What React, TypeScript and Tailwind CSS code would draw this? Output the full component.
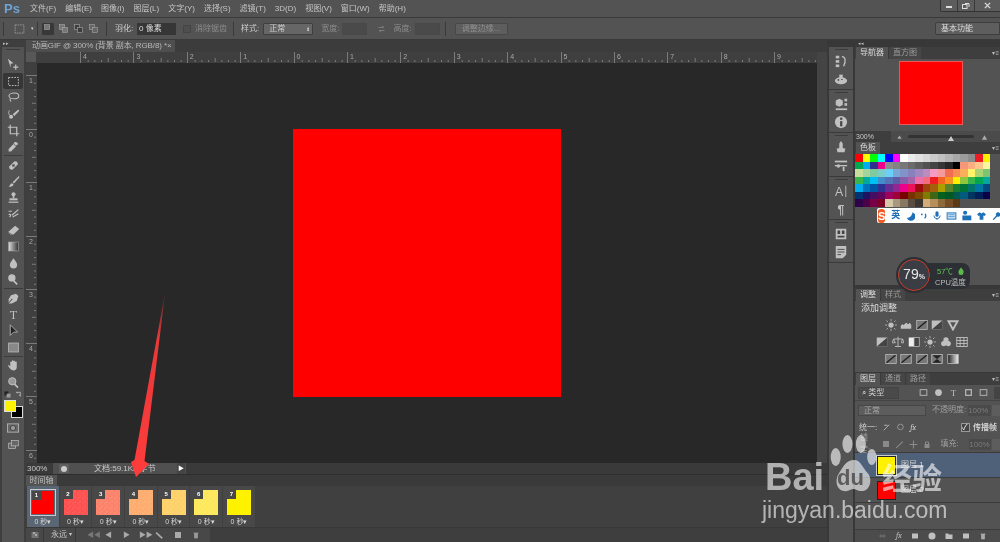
import React from "react";

const S: React.FC<{ w?: number; h?: number; v?: string; className?: string; children: React.ReactNode }> = ({ w = 14, h = 14, v = "0 0 16 16", className = "", children }) => (
  <svg width={w} height={h} viewBox={v} className={"shrink-0 " + className}>{children}</svg>
);
const G = "#c0c0c0";

const toolIcons: React.ReactNode[] = [
  <g fill={G}><path d="M1 1l7 5.500-3.500 .5v5z" /><path d="M10 8h1.500v2.500H14V12h-2.500v2.500H10V12H7.500v-1.500H10z" /></g>,
  <rect x="2" y="3" width="12" height="10" fill="none" stroke={G} strokeWidth="1.200" strokeDasharray="2 1.500" />,
  <g fill="none" stroke={G} strokeWidth="1.300"><ellipse cx="8.500" cy="6" rx="6" ry="3.500" /><path d="M4 9c-1 2 0 3 1 4" /></g>,
  <g fill={G}><path d="M14 3L7 9l2 2 6-6z" /><circle cx="5" cy="12" r="2.500" /><path d="M3 4a5 5 0 0 0 0 6" fill="none" stroke={G} /></g>,
  <g fill="none" stroke={G} strokeWidth="1.500"><path d="M4 1v11h11M1 4h11v11" /></g>,
  <g fill={G}><path d="M11 2l3 3-2 1-1 1-3-3 1-1z" /><path d="M8 5l3 3-6 6H2v-3z" /></g>,
  <g fill={G}><path d="M3 9l6-6a3 3 0 0 1 4 4l-6 6a3 3 0 0 1-4-4z" /><rect x="6.500" y="6.500" width="3" height="3" fill="#555" /></g>,
  <g fill={G}><path d="M15 1L7 9l1.500 1.500L15 3z" /><path d="M6 10c-2 0-2 3-4 4 3 1 6 0 6-2.500z" /></g>,
  <g fill={G}><circle cx="8" cy="4" r="2.500" /><rect x="7" y="5" width="2" height="4" /><rect x="3" y="9" width="10" height="2.500" /><rect x="2" y="13" width="12" height="1.500" /></g>,
  <g fill="none" stroke={G} strokeWidth="1.500"><path d="M14 2L6 9M14 7l-7 4" /><path d="M2 8c3-1 3 2 1 3M2 4h4" /></g>,
  <g fill={G}><path d="M10 2l5 4-7 7H4l-3-3z" /><path d="M1 10l5 3" stroke="#555" /></g>,
  <g><defs><linearGradient id="gr"><stop offset="0" stopColor="#ddd" /><stop offset="1" stopColor="#333" /></linearGradient></defs><rect x="2" y="2.500" width="12" height="11" fill="url(#gr)" stroke="#aaa" strokeWidth=".7" /></g>,
  <path d="M8 1.500c2 3 4.500 5.500 4.500 8a4.500 4.500 0 0 1-9 0c0-2.500 2.500-5 4.500-8z" fill={G} />,
  <g fill={G}><circle cx="6" cy="6" r="4.500" /><rect x="9" y="9" width="6" height="2" transform="rotate(45 9 9)" /></g>,
  <g fill={G}><path d="M11 2l3 3-2 6-6 3-4 0 5-5-1-1-4 5 0-4 3-5z" /></g>,
  <text x="8" y="14" textAnchor="middle" fontSize="15" fontFamily="'Liberation Serif',serif" fill={G}>T</text>,
  <path d="M4 1l9 9H8l-4 4z" fill="#222" stroke={G} />,
  <rect x="2" y="2.500" width="12" height="11" fill="#888" stroke="#bbb" />,
  <path d="M4 8V4a1 1 0 0 1 2 0V2.500a1 1 0 0 1 2 0V3a1 1 0 0 1 2 0v1a1 1 0 0 1 2 0v6c0 3-2 4-4 4-3 0-4-2-7-6 1-1 2 0 3 1z" fill={G} />,
  <g><circle cx="6.500" cy="6.500" r="4.500" fill="#999" stroke={G} strokeWidth="1.200" /><rect x="9.500" y="9.500" width="6" height="2" transform="rotate(45 10 10)" fill={G} /></g>,
];
const toolGroups = [[0, 1, 2, 3, 4, 5], [6, 7, 8, 9, 10, 11, 12, 13], [14, 15, 16, 17], [18, 19]];

const Toolbar = () => (
  <div className="w-[26px] shrink-0 bg-[#3e3e3e] flex flex-col">
    <div className="h-[7px] text-[5px] leading-[7px] text-[#bbb] pl-[3px]">▸▸</div>
    <div className="ml-[2px] w-[22px] flex-1 bg-[#535353] flex flex-col items-center pt-[2px]">
      <div className="w-[14px] h-px bg-[#3a3a3a] mb-[6.500px]" />
      {toolGroups.map((g, i) => (
        <div key={i} className="flex flex-col items-center w-full">
          {g.map(t => (
            <div key={t} className={"relative w-[20px] h-[16.400px] flex items-center justify-center " + (t === 1 ? "bg-[#363636] rounded-[2px]" : "")}>
              <S w={13} h={13}>{toolIcons[t]}</S>
            </div>
          ))}
          {i < 3 && <div className="w-[19px] h-px bg-[#3c3c3c] my-[0.500px]" />}
        </div>
      ))}
      <div className="w-full flex justify-between px-[2px] mt-[1px] h-[9px]">
        <S w={7} h={7}><rect x="1" y="1" width="9" height="9" fill="#222" /><rect x="6" y="6" width="9" height="9" fill="#999" /></S>
        <S w={7} h={7}><path d="M3 3h9v9M12 12l-2-3M3 3l3 2" fill="none" stroke="#bbb" strokeWidth="2" /></S>
      </div>
      <div className="w-[19px] h-[19px] relative">
        <div className="w-[12px] h-[12px] bg-[#000] border border-[#ddd] ml-[7px] mt-[6px]" />
        <div className="absolute left-0 top-0 w-[12px] h-[12px] bg-[#fff200] border border-[#ddd]" />
      </div>
      <div className="mt-[1px] h-[16px] flex items-center">
        <S w={12} h={10} v="0 0 16 12"><rect x=".5" y=".5" width="15" height="11" fill="#666" stroke={G} /><circle cx="8" cy="6" r="3.500" fill="#999" stroke="#333" /></S>
      </div>
      <div className="h-[16px] flex items-center">
        <S w={13} h={11}><rect x="1" y="6" width="10" height="8" fill="#666" stroke={G} /><rect x="5" y="2" width="10" height="8" fill="#666" stroke={G} /></S>
      </div>
    </div>
  </div>
);

const menus = ["文件(F)", "编辑(E)", "图像(I)", "图层(L)", "文字(Y)", "选择(S)", "滤镜(T)", "3D(D)", "视图(V)", "窗口(W)", "帮助(H)"];

const MenuBar = () => (
  <div className="h-[18px] shrink-0 bg-[#535353] border-b border-[#3a3a3a] flex items-start relative">
    <div className="w-[30px] pl-[4px] h-[17px] text-[#6fa3d3] text-[13px] leading-[17px] font-bold">Ps</div>
    <div className="flex gap-[9px] text-[8px] leading-[17px] text-[#c4c4c4]">
      {menus.map(m => <span key={m}>{m}</span>)}
    </div>
    <div className="ml-auto flex h-[12px] w-[60px] bg-[#5c5c5c] border-b border-l border-[#333] rounded-bl-[2px]">
      <div className="w-[17px] flex items-center justify-center border-r border-[#3a3a3a]"><div className="w-[6px] h-[1.500px] mt-[3px] bg-[#ddd]" /></div>
      <div className="w-[17px] flex items-center justify-center border-r border-[#3a3a3a]"><S w={8} h={8}><rect x="1" y="5" width="9" height="8" fill="none" stroke="#ddd" strokeWidth="2" /><path d="M6 3h8v7" fill="none" stroke="#ddd" strokeWidth="2" /></S></div>
      <div className="flex-1 flex items-center justify-center"><S w={7} h={7}><path d="M2 2l12 12M14 2L2 14" stroke="#ddd" strokeWidth="3" /></S></div>
    </div>
  </div>
);

const Sep = ({ cls }: { cls: string }) => <div className={"w-px h-[14px] bg-[#3a3a3a] " + cls} />;
const ModeIc = ({ a, on }: { a: string; on?: boolean }) => (
  <div className={"w-[12px] h-[12px] flex items-center justify-center " + (on ? "bg-[#383838] rounded-[1px]" : "")}>
    <S w={9} h={9}><rect x="1" y="1" width="9" height="9" fill={a} stroke="#aaa" /><rect x="6" y="6" width="9" height="9" fill={on ? "none" : a} stroke={on ? "none" : "#aaa"} /></S>
  </div>
);
const DimInput = ({ w, ml }: { w: string; ml: string }) => <div className={"h-[12px] bg-[#4a4a4a] border border-[#484848] " + w + " " + ml} />;

const OptionsBar = () => (
  <div className="h-[22px] shrink-0 bg-[#535353] border-b border-[#3a3a3a] flex items-center text-[8px] text-[#cfcfcf]">
    <Sep cls="ml-[3px]" />
    <S w={11} h={10} className="ml-[10px]"><rect x="1" y="1.500" width="14" height="13" fill="none" stroke="#aaa" strokeWidth="1.300" strokeDasharray="2.500 1.500" /></S>
    <span className="ml-[6px] text-[5px]">▾</span>
    <Sep cls="ml-[3px]" />
    <div className="ml-[4px] flex gap-[3px]"><ModeIc a="#777" on /><ModeIc a="#777" /><ModeIc a="#3e3e3e" /><ModeIc a="#666" /></div>
    <Sep cls="ml-[7px]" />
    <span className="ml-[8px] w-[19px]">羽化:</span>
    <div className="ml-[3px] w-[39px] h-[12px] bg-[#363636] pl-[2px] leading-[12px] text-[#ddd]">0 像素</div>
    <div className="ml-[7px] w-[8px] h-[8px] bg-[#4e4e4e] border border-[#444]" />
    <span className="ml-[4px] text-[#8c8c8c]">消除锯齿</span>
    <Sep cls="ml-[6px]" />
    <span className="ml-[7px]">样式:</span>
    <div className="ml-[4px] w-[50px] h-[12px] bg-[#666] border border-[#3e3e3e] rounded-[1px] pl-[5px] leading-[10px] flex justify-between pr-[2px]"><span>正常</span><span className="text-[5px]">⬍</span></div>
    <span className="ml-[8px] text-[#8c8c8c]">宽度:</span>
    <DimInput w="w-[25px]" ml="ml-[3px]" />
    <S w={9} h={8} className="ml-[10px]"><path d="M2 5h10M9 2l4 3M14 11H4M7 14l-4-3" stroke="#888" strokeWidth="1.500" fill="none" /></S>
    <span className="ml-[7px] text-[#8c8c8c]">高度:</span>
    <DimInput w="w-[25px]" ml="ml-[3px]" />
    <Sep cls="ml-[5px]" />
    <div className="ml-[9px] w-[53px] h-[12px] bg-[#5e5e5e] border border-[#484848] rounded-[1px] text-center leading-[10px] text-[#8f8f8f]">调整边缘...</div>
    <div className="ml-auto w-[65px] h-[13px] bg-[#5e5e5e] border border-[#3e3e3e] rounded-l-[2px] pl-[5px] leading-[11px] text-[#ddd]">基本功能</div>
  </div>
);

const Ticks = ({ vertical }: { vertical?: boolean }) => (
  vertical ? (
    <svg width="10" height="53.500" className="absolute left-0 top-0">
      {[1, 2, 3, 4, 5, 6, 7].map(i => <rect key={i} x={i === 4 ? 6 : 8} y={i * 6.69} width={i === 4 ? 4 : 2} height="1" fill="#7a7a7a" />)}
    </svg>
  ) : (
    <svg width="53.400" height="10" className="absolute left-0 top-0">
      {[1, 2, 3, 4, 5, 6, 7].map(i => <rect key={i} x={i * 6.67} y={i === 4 ? 6 : 8} width="1" height={i === 4 ? 4 : 2} fill="#7a7a7a" />)}
    </svg>
  )
);

const topRuler = ["4", "3", "2", "1", "0", "1", "2", "3", "4", "5", "6", "7", "8", "9"];
const sideRuler = ["1", "0", "1", "2", "3", "4", "5", "6"];

const Frame = ({ n, sel, color }: { n: number; sel?: boolean; color: string }) => (
  <div className={"w-[31.700px] mr-px h-full flex flex-col items-center pt-[3px] " + (sel ? "bg-[#5b6675]" : "bg-[#484848]")}>
    <div className={"relative w-[26px] h-[28px] p-px " + (sel ? "border border-[#c8ccd2]" : "")}>
      <div className="w-full h-full" style={{ background: color }} />
      <div className="absolute left-px top-px w-[9px] h-[9px] bg-[#484848] text-white text-[6px] leading-[9px] font-bold text-center">{n}</div>
    </div>
    <div className="text-[7px] leading-[10px] text-[#d8d8d8] mt-[1px]">0 秒▾</div>
  </div>
);
const ck = (c: string, d: string) => `repeating-conic-gradient(${c} 0% 25%, ${d} 0% 50%) 0 0 / 5px 5px`;
const frames = [
  { color: "#ff0000" },
  { color: ck("#ff5050", "#fb5a58") },
  { color: ck("#fd806a", "#fa8a70") },
  { color: ck("#ffaa6e", "#fcb276") },
  { color: ck("#ffd068", "#fcd472") },
  { color: ck("#ffe75a", "#fce964") },
  { color: "#fff200" },
];

const Center = () => (
  <div className="flex-1 min-w-0 flex flex-col bg-[#3a3a3a]">
    <div className="h-[12px] shrink-0 flex bg-[#3c3c3c]">
      <div className="w-[149px] bg-[#4e4e4e] text-[8px] leading-[11px] text-[#b8b8b8] pl-[6px] flex justify-between pr-[4px] whitespace-nowrap overflow-hidden">
        <span className="tracking-[-0.1px]">动画GIF @ 300% (背景 副本, RGB/8) *</span><span>×</span>
      </div>
    </div>
    <div className="flex-1 min-h-0 flex">
      <div className="flex-1 min-w-0 flex flex-col">
        <div className="h-[11px] shrink-0 flex bg-[#3f3f3f] overflow-hidden">
          <div className="w-[10px] h-[10px] bg-[#575757] shrink-0" />
          <div className="w-[44px] shrink-0 relative" />
          {topRuler.map((t, i) => (
            <div key={i} className="w-[53.400px] shrink-0 relative border-l border-[#7a7a7a] text-[7px] leading-[9px] pl-[2px] text-[#a8a8a8]">
              <Ticks />{t}
            </div>
          ))}
        </div>
        <div className="flex-1 min-h-0 flex">
          <div className="w-[11px] shrink-0 bg-[#3f3f3f] flex flex-col overflow-hidden">
            <div className="h-[12px] shrink-0" />
            {sideRuler.map((t, i) => (
              <div key={i} className="h-[53.500px] shrink-0 relative border-t border-[#7a7a7a] text-[7px] leading-[9px] pl-[3px] text-[#a8a8a8]">
                <Ticks vertical />{t}
              </div>
            ))}
          </div>
          <div className="flex-1 bg-[#282828] flex items-center justify-center pb-[1px]">
            <div className="w-[268px] h-[268px] bg-[#ff0000]" />
          </div>
        </div>
      </div>
      <div className="w-[10px] shrink-0 bg-[#444]" />
    </div>
    <div className="h-[11px] shrink-0 flex bg-[#3a3a3a] text-[8px] leading-[11px] text-[#c8c8c8]">
      <div className="w-[27px] pl-px">300%</div>
      <div className="w-[133px] bg-[#505050] flex items-center">
        <div className="w-[10px] h-[9px] ml-[6px] bg-[#5f5f5f] flex items-center justify-center"><div className="w-[6px] h-[6px] rounded-full bg-[#ccc]" /></div>
        <div className="ml-[25px] w-[62px] whitespace-nowrap">文档:59.1K/0字节</div>
        <div className="w-[8px] h-full bg-[#444] ml-auto mr-px text-[6px] text-white text-center">▶</div>
      </div>
    </div>
    <div className="h-[12px] shrink-0 flex bg-[#3a3a3a] border-t border-[#2e2e2e]">
      <div className="w-[31px] bg-[#535353] text-[8px] leading-[11px] text-center text-[#bdbdbd]">时间轴</div>
    </div>
    <div className="h-[41px] shrink-0 bg-[#404040] flex pl-[1px]">
      {frames.map((f, i) => <Frame key={i} n={i + 1} sel={i === 0} color={f.color} />)}
    </div>
    <div className="h-[15px] shrink-0 bg-[#3e3e3e] border-t border-[#383838] text-[#c8c8c8] text-[8px]">
      <div className="w-[184px] h-full bg-[#484848] flex items-center">
        <div className="w-[18px] flex justify-center border-r border-[#383838] h-full items-center">
          <S w={10} h={8}><path d="M1 4h14M1 8h14M1 12h14" stroke="#bbb" strokeWidth="1.500" /><path d="M6 2v4M10 6v4" stroke="#ddd" strokeWidth="2" /></S>
        </div>
        <div className="w-[32px] pl-[7px] flex justify-between pr-[3px] border-r border-[#383838] h-full leading-[13px]"><span>永远</span><span className="text-[6px]">▾</span></div>
        <div className="flex items-center pl-[11px] text-[7px] text-[#a8a8a8] tracking-tighter">
          <span className="w-[18px] text-[#777]">◀◀</span><span className="w-[18px] text-[#aaa]">◀</span><span className="w-[16px]">▶</span><span className="w-[14px]">▶▶</span>
        </div>
        <S w={9} h={9} className="ml-[2px]"><path d="M2 3l11 10" stroke="#aaa" strokeWidth="3" /></S>
        <S w={8} h={8} className="ml-[10px]"><rect x="2" y="2" width="12" height="12" fill="#aaa" /></S>
        <S w={8} h={8} className="ml-[10px]"><path d="M3 4h10M5 4v10h6V4" fill="#999" stroke="#999" strokeWidth="1.500" /></S>
      </div>
    </div>
  </div>
);

const dockGroups: React.ReactNode[][] = [
  [<g fill={G}><rect x="2" y="2" width="4" height="3" /><rect x="2" y="7" width="4" height="3" /><rect x="2" y="12" width="4" height="3" /><path d="M9 3c4 0 5 5 2 11" fill="none" stroke={G} strokeWidth="1.500" /></g>,
   <g><ellipse cx="8" cy="10" rx="7" ry="4" fill={G} /><circle cx="5" cy="9" r="1" fill="#444" /><circle cx="9" cy="8" r="1" fill="#444" /><rect x="6" y="3" width="4" height="5" fill={G} /></g>],
  [<g fill={G}><path d="M2 4l4-2 4 2v5l-4 2-4-2z" /><rect x="12" y="2" width="3" height="3" /><rect x="12" y="7" width="3" height="3" /><rect x="2" y="13" width="13" height="2" /></g>,
   <g><circle cx="8" cy="8" r="7" fill={G} /><rect x="7" y="7" width="2.500" height="6" fill="#444" /><rect x="7" y="3" width="2.500" height="2.500" fill="#444" /></g>],
  [<g fill={G}><path d="M8 1l2 3v5l3 1-1 4H4l-1-4 3-1V4z" /></g>,
   <g fill={G}><rect x="1" y="3" width="14" height="2" /><circle cx="5" cy="9" r="2" /><rect x="1" y="8" width="14" height="1.500" /><path d="M11 10v5" stroke={G} strokeWidth="2" /></g>],
  [<g><text x="1" y="14" fontSize="14" fontFamily="'Liberation Sans',sans-serif" fill={G}>A</text><rect x="13" y="2" width="1" height="13" fill={G} /></g>,
   <text x="4" y="14" fontSize="14" fontWeight="bold" fontFamily="'Liberation Sans',sans-serif" fill={G}>¶</text>],
  [<g><rect x="2" y="2" width="12" height="12" fill={G} /><rect x="4" y="4" width="3" height="4" fill="#444" /><rect x="9" y="4" width="3" height="4" fill="#444" /><rect x="4" y="10" width="8" height="2" fill="#444" /></g>,
   <g><path d="M2 1h12v10l-4 4H2z" fill={G} /><path d="M4 5h8M4 8h8M4 11h4" stroke="#444" /></g>],
];

const Dock = () => (
  <div className="w-[28px] shrink-0 bg-[#383838] flex flex-col pl-[2px] pr-[2px]">
    <div className="h-[7px]" />
    {dockGroups.map((g, i) => (
      <div key={i} className="h-[43.200px] shrink-0 bg-[#535353] border-b border-[#3a3a3a] flex flex-col items-center pt-[2px] gap-[4px]">
        <div className="w-[13px] h-px bg-[#3c3c3c]" />
        {g.map((c, j) => <S key={j} w={14} h={14}>{c}</S>)}
      </div>
    ))}
    <div className="flex-1 bg-[#535353]" />
  </div>
);

const swatchRows = [
  ["#ff0000","#ffff00","#00ff00","#00ffff","#0000ff","#ff00ff","#ffffff","#ebebeb","#e1e1e1","#d7d7d7","#cbcbcb","#c0c0c0","#b4b4b4","#a8a8a8","#9b9b9b","#8d8d8d","#ed1c24","#fff200"],
  ["#00a651","#00aeef","#2e3192","#ec008c","#8c8c8c","#828282","#777777","#6b6b6b","#5e5e5e","#525252","#444444","#363636","#262626","#000000","#f7977a","#fbad82","#fdc68c","#fff799"],
  ["#c6df9c","#a4d49d","#81ca9d","#7bcdc9","#6ccff7","#7ca6d8","#8293ca","#8881be","#a286bd","#bc8cbf","#f49bc1","#f5999d","#f26c4f","#f68e55","#fbaf5a","#fff467","#acd372","#7dc473"],
  ["#39b54a","#00a99d","#00bff3","#438ccb","#5573b7","#5e5ca7","#855fa8","#a763a9","#ef6ea8","#f16d7e","#ee1d24","#f16522","#f7941d","#fff100","#8fc63d","#37b44a","#00a650","#00a99e"],
  ["#00aeef","#0072bc","#0054a5","#2f3192","#652c91","#91278f","#ed008c","#ee105a","#9d0a0f","#a1410d","#a36209","#aba000","#588528","#197b30","#007236","#00736a","#0076a4","#004a80"],
  ["#003370","#1d1363","#450e61","#62055f","#9e005c","#9d0039","#790000","#7b3000","#7c4900","#827a00","#3e6617","#045f20","#005824","#005951","#005b7e","#003562","#002056","#0c004b"],
  ["#30004a","#4b0048","#7a0045","#7a0026","#d5c8a8","#a99880","#897860","#5a4c40","#3c3630","#d2ad78","#b68e5a","#8c6a3a","#754e26","#5a3a14"],
];

const Tabs = ({ items }: { items: string[] }) => (
  <div className="h-[12px] shrink-0 flex bg-[#3e3e3e] text-[8px] leading-[12px] relative pl-px">
    {items.map((t, i) => (
      <div key={t} className={"px-[4px] " + (i === 0 ? "bg-[#535353] text-[#d8d8d8]" : "bg-[#464646] text-[#9c9c9c] border-l border-[#3a3a3a]")}>{t}</div>
    ))}
    <span className="ml-auto text-[#bbb] text-[6px] pr-px">▾≡</span>
  </div>
);

const adj: React.ReactNode[] = [
  <g fill={G}><circle cx="8" cy="8" r="3.500" /><path d="M8 0v3M8 13v3M0 8h3M13 8h3M2 2l2 2M12 12l2 2M14 2l-2 2M2 14l2-2" stroke={G} /></g>,
  <path d="M1 13V9l2-2 2 1 3-3 3 2 2-2 2 3v5z" fill={G} />,
  <path d="M8 14L2 3h12z" fill="none" stroke={G} strokeWidth="2.500" />,
  <g><rect x="1" y="2" width="14" height="12" fill={G} /><path d="M1 14L15 2v12z" fill="#444" /></g>,
  <g><rect x="1" y="2" width="7" height="12" fill="#eee" /><rect x="8" y="2" width="7" height="12" fill="#444" stroke={G} /></g>,
  <g><rect x="1" y="2" width="14" height="12" fill="#777" stroke={G} /><path d="M2 13L14 3" stroke="#222" strokeWidth="2" /></g>,
  <g fill="none" stroke={G} strokeWidth="1.200"><path d="M8 1v13M4 14h8M2 4h12M2 4l-1.500 5h4zM14 4l-1.500 5h4z" /></g>,
  <g fill={G}><circle cx="8" cy="5" r="3.500" /><circle cx="5" cy="10" r="3.500" /><circle cx="11" cy="10" r="3.500" /></g>,
  <g fill="none" stroke={G} strokeWidth="1.200"><rect x="1" y="2" width="14" height="12" /><path d="M1 6h14M1 10h14M5.500 2v12M10.500 2v12" /></g>,
  <g><rect x="1" y="2" width="14" height="12" fill="#777" stroke={G} /><path d="M2 3h12L2 13h12z" fill="#222" /></g>,
  <g><defs><linearGradient id="gr2"><stop offset="0" stopColor="#222" /><stop offset="1" stopColor="#eee" /></linearGradient></defs><rect x="1" y="2" width="14" height="12" fill="url(#gr2)" stroke={G} /></g>,
];
const AdjIc = ({ k }: { k: number }) => <S w={12} h={12}>{adj[k]}</S>;

const Panels = () => (
  <div className="w-[145px] shrink-0 bg-[#383838] flex flex-col">
    <div className="h-[7px] text-[5px] leading-[7px] text-right pr-[136px] text-[#bbb]">◂◂</div>
    <Tabs items={["导航器", "直方图"]} />
    <div className="h-[83px] shrink-0 bg-[#535353] flex flex-col">
      <div className="flex-1 flex items-start justify-center pl-[7px] pt-[2px]">
        <div className="w-[64px] h-[64px] bg-[#ff0000] border border-[#e85858]" />
      </div>
      <div className="h-[11px] flex items-center bg-[#4b4b4b]">
        <div className="w-[36px] h-full bg-[#3e3e3e] text-[7px] leading-[11px] pl-[1px] text-[#c8c8c8]">300%</div>
        <S w={7} h={5} className="ml-[5px]"><path d="M1 15L8 5l7 10z" fill="#aaa" /></S>
        <div className="ml-[5px] w-[66px] h-[3px] bg-[#333] rounded relative"><div className="absolute left-[40px] top-[1px] border-x-[3px] border-x-transparent border-b-[5px] border-b-[#ccc]" /></div>
        <S w={11} h={6} className="ml-[5px]"><path d="M1 15L8 3l7 12z" fill="#aaa" /></S>
      </div>
    </div>
    <Tabs items={["色板"]} />
    <div className="h-[131px] shrink-0 bg-[#535353]">
      <div className="flex flex-col">
        {swatchRows.map((r, i) => (
          <div key={i} className="flex h-[7.500px]">
            {r.map((c, j) => <div key={j} className="w-[7.500px] h-full" style={{ background: c }} />)}
          </div>
        ))}
      </div>
    </div>
    <div className="h-[4px] shrink-0" />
    <Tabs items={["调整", "样式"]} />
    <div className="h-[71px] shrink-0 bg-[#535353] text-[9px] text-[#dcdcdc] pl-[6px] pt-px leading-[12px]">
      添加调整
      <div className="flex flex-col items-center mt-[5px] gap-[5px] pr-[18px]">
        <div className="flex gap-[3.500px]">{[0, 1, 5, 3, 2].map((k, i) => <AdjIc key={i} k={k} />)}</div>
        <div className="flex gap-[4px]">{[3, 6, 4, 0, 7, 8].map((k, i) => <AdjIc key={i} k={k} />)}</div>
        <div className="flex gap-[3.500px]">{[5, 5, 5, 9, 10].map((k, i) => <AdjIc key={i} k={k} />)}</div>
      </div>
    </div>
    <div className="h-px shrink-0" />
    <Tabs items={["图层", "通道", "路径"]} />
    <div className="flex-1 min-h-0 bg-[#535353] flex flex-col text-[8px] text-[#cfcfcf]">
      <div className="h-[16px] shrink-0 flex items-center pl-[3px] gap-[6px] border-b border-[#444]">
        <div className="w-[44px] h-[12px] bg-[#4a4a4a] border border-[#444] pl-[3px] leading-[10px] mr-[14px]">⌕ 类型</div>
        {[0, 1, 2, 3, 4].map(i => <S key={i} w={9} h={9}>{i === 2 ? <text x="3" y="15" fontSize="16" fontFamily="'Liberation Serif',serif" fill={G}>T</text> : i === 3 ? <rect x="3" y="3" width="10" height="10" fill="none" stroke={G} strokeWidth="2" /> : i === 1 ? <circle cx="8" cy="8" r="6" fill={G} /> : <rect x="2" y="3" width="12" height="10" fill="none" stroke={G} strokeWidth="1.500" />}</S>)}
        <div className="ml-auto w-[6px] h-[12px] bg-[#444]" />
      </div>
      <div className="h-[18px] shrink-0 flex items-center pl-[3px]">
        <div className="w-[68px] h-[11px] bg-[#5d5d5d] border border-[#464646] leading-[9px] pl-[5px] text-[#aaa]">正常</div>
        <span className="ml-[6px] w-[36px] text-[#a0a0a0]">不透明度:</span>
        <div className="w-[23px] h-[11px] bg-[#4a4a4a] text-[#7c7c7c] leading-[11px]">100%</div>
        <div className="ml-[1px] w-[8px] h-[11px] bg-[#5d5d5d]" />
      </div>
      <div className="h-[17px] shrink-0 flex items-center pl-[4px]">
        <span>统一:</span>
        <S w={10} h={9} className="ml-[5px]"><path d="M2 13L12 3M3 4h6" stroke={G} strokeWidth="1.500" /></S>
        <S w={10} h={9} className="ml-[4px]"><circle cx="7" cy="7" r="5" fill="none" stroke={G} /></S>
        <span className="ml-[4px] italic font-serif">fx</span>
        <div className="ml-[45px] w-[9px] h-[9px] bg-[#444] border border-[#999] text-[8px] leading-[7px] text-white">✓</div>
        <span className="ml-[3px] font-bold">传播帧</span>
      </div>
      <div className="h-[17px] shrink-0 flex items-center pl-[5px] text-[#a0a0a0] border-b border-[#3c3c3c]">
        <span>锁定:</span>
        <S w={8} h={8} className="ml-[5px]"><rect x="2" y="2" width="12" height="12" fill="#8a8a8a" /></S>
        <S w={9} h={9} className="ml-[5px]"><path d="M2 14L14 3" stroke="#8a8a8a" strokeWidth="2" /></S>
        <S w={9} h={9} className="ml-[5px]"><path d="M8 1v14M1 8h14" stroke="#8a8a8a" strokeWidth="2" /></S>
        <S w={8} h={9} className="ml-[5px]"><rect x="3" y="7" width="10" height="8" fill="#8a8a8a" /><path d="M5 7V3h6v4" stroke="#8a8a8a" fill="none" strokeWidth="2" /></S>
        <span className="ml-[9px] w-[30px]">填充:</span>
        <div className="w-[23px] h-[11px] bg-[#4a4a4a] text-[#7c7c7c] leading-[11px]">100%</div>
        <div className="ml-[1px] w-[8px] h-[11px] bg-[#5d5d5d]" />
      </div>
      <div className="h-[25px] shrink-0 flex items-center bg-[#4f6079] border-b border-[#3c3c3c] pl-[22px]">
        <div className="w-[19px] h-[19px] bg-[#fff200] border border-[#222] outline outline-[#ccc]" />
        <span className="ml-[5px]">图层 1</span>
      </div>
      <div className="h-[25px] shrink-0 flex items-center border-b border-[#3c3c3c] pl-[22px]">
        <div className="w-[19px] h-[19px] bg-[#ff0000] border border-[#222]" />
        <span className="ml-[5px]">图层 0</span>
      </div>
      <div className="flex-1" />
      <div className="h-[13px] shrink-0 bg-[#4c4c4c] flex items-center gap-[9px] pl-[23px] border-t border-[#3c3c3c]">
        <S w={9} h={6}><path d="M1 8a3 3 0 0 1 6 0 3 3 0 0 1-6 0M9 8a3 3 0 0 1 6 0 3 3 0 0 1-6 0" fill="none" stroke="#888" strokeWidth="1.500" /></S>
        <span className="italic font-serif text-[#bbb]">fx</span>
        {[0, 1, 2, 3, 4].map(k => <S key={k} w={8} h={8}>{k === 1 ? <circle cx="8" cy="8" r="7" fill={G} /> : k === 2 ? <path d="M1 3h5l2 2h7v9H1z" fill={G} /> : k === 4 ? <path d="M3 4h10M5 4v10h6V4" fill="#aaa" stroke="#aaa" strokeWidth="1.500" /> : <rect x="2" y="3" width="12" height="10" fill={G} />}</S>)}
      </div>
    </div>
  </div>
);

const Sogou = () => (
  <div className="absolute left-[877px] top-[208px] w-[123px] h-[15px] bg-white flex items-center pl-[1px] gap-[4px] text-[#1d6fb8] rounded-l-[2px]">
    <div className="w-[14px] h-[14px] bg-[#f25a22] rounded-[3px] text-white text-[11px] leading-[14px] font-bold text-center">S</div>
    <span className="text-[9px] font-bold ml-[2px]">英</span>
    <S w={10} h={10} className="ml-[1px]"><path d="M12 2a7 7 0 1 1-9 9 9 9 0 0 0 9-9z" fill="#1d6fb8" /></S>
    <S w={9} h={9}><circle cx="5" cy="6" r="1.500" fill="#1d6fb8" /><path d="M11 5c2 3 1 6-1 8" stroke="#1d6fb8" strokeWidth="2" fill="none" /></S>
    <S w={10} h={11}><rect x="5.500" y="1" width="5" height="9" rx="2.500" fill="#1d6fb8" /><path d="M3 8a5 5 0 0 0 10 0M8 13v2" stroke="#1d6fb8" fill="none" strokeWidth="1.500" /></S>
    <S w={11} h={10}><rect x="1" y="3" width="14" height="10" fill="#cfe4f5" stroke="#1d6fb8" strokeWidth="1.500" /><path d="M3 6h10M3 9h10" stroke="#1d6fb8" /></S>
    <S w={11} h={11}><circle cx="6" cy="4" r="3" fill="#1d6fb8" /><rect x="2" y="8" width="13" height="7" fill="#1d6fb8" /></S>
    <S w={11} h={10}><path d="M5 2L1 5l2 3 2-1v7h6V7l2 1 2-3-4-3-3 2z" fill="#1d6fb8" /></S>
    <S w={9} h={10}><path d="M3 14l6-7a4 4 0 1 1 2 2l-6 6z" fill="#1d6fb8" /></S>
  </div>
);

const Cpu = () => (
  <div className="absolute left-[897px] top-[259px] w-[74px] h-[32px] flex items-center">
    <div className="absolute left-[6px] top-[4px] w-[67px] h-[26px] bg-[#2c2f33] rounded-[8px]" />
    <div className="relative w-[32px] h-[32px] rounded-full bg-[#3a3d44] border-[1.500px] border-[#d03a22] outline-2 outline-[#2c2f33] text-[#e8e8e8] text-[14px] leading-[29px] text-center shrink-0 ml-[1px]">79<span className="text-[7px] font-bold">%</span></div>
    <div className="relative ml-[5px] text-[7.500px] leading-[11px] text-[#bdbdbd] pt-[3px]">
      <div className="text-[#62c05a] flex pl-[2px]">57℃<S w={8} h={10} className="ml-[4px]"><path d="M8 1c4 4 6 7 5 10a5 5 0 0 1-10 0C2 8 5 5 8 1z" fill="#5cb84a" /></S></div>
      <div>CPU温度</div>
    </div>
  </div>
);

const Arrow = () => (
  <svg className="absolute left-[120px] top-[285px] pointer-events-none" width="60" height="195" viewBox="0 0 60 195">
    <defs><linearGradient id="ar" x1="0" y1="0" x2="0" y2="1"><stop offset="0" stopColor="#f03a3a" stopOpacity="0.050" /><stop offset=".25" stopColor="#e83838" /><stop offset="1" stopColor="#ff3c3c" /></linearGradient></defs>
    <path d="M45.500 5L24.500 176L29 179L16 192L11 177L14.500 175Z" fill="url(#ar)" />
  </svg>
);

const Watermark = () => (
  <div className="absolute left-[762px] top-[433px] w-[190px] h-[90px] text-white/60 pointer-events-none font-['Liberation_Sans',sans-serif]">
    <div className="absolute left-[3px] top-[24px] text-[38px] leading-[40px] font-bold">Bai</div>
    <svg className="absolute left-[67px] top-[2px]" width="52" height="62" viewBox="0 0 62 62" preserveAspectRatio="none" fill="rgba(255,255,255,.6)">
      <ellipse cx="8" cy="22" rx="6" ry="9" /><ellipse cx="22" cy="9" rx="6" ry="9" /><ellipse cx="38" cy="9" rx="6" ry="9" /><ellipse cx="51" cy="22" rx="5.500" ry="8" />
      <path d="M30 25c8 0 10 8 16 13s4 19-8 18c-4 0-6-2-9-2s-6 3-11 2c-10-1-11-12-6-18s8-13 18-13z" />
    </svg>
    <div className="absolute left-[75px] top-[33px] text-[22px] leading-[24px] font-bold text-[#5c5c5c]">du</div>
    <div className="absolute left-[120px] top-[27px] text-[30px] leading-[32px] font-bold font-['Noto_Sans_CJK_SC',sans-serif]">经验</div>
    <div className="absolute left-0 top-[64px] text-[23px] leading-[26px] whitespace-nowrap">jingyan.baidu.com</div>
  </div>
);

export default function App() {
  return (
    <div className="relative w-[1000px] h-[542px] overflow-hidden flex flex-col bg-[#383838] font-['Liberation_Sans','Noto_Sans_CJK_SC',sans-serif] blur-[0.4px]">
      <MenuBar />
      <OptionsBar />
      <div className="flex-1 min-h-0 flex">
        <Toolbar />
        <Center />
        <Dock />
        <Panels />
      </div>
      <Sogou />
      <Cpu />
      <Arrow />
      <Watermark />
    </div>
  );
}
